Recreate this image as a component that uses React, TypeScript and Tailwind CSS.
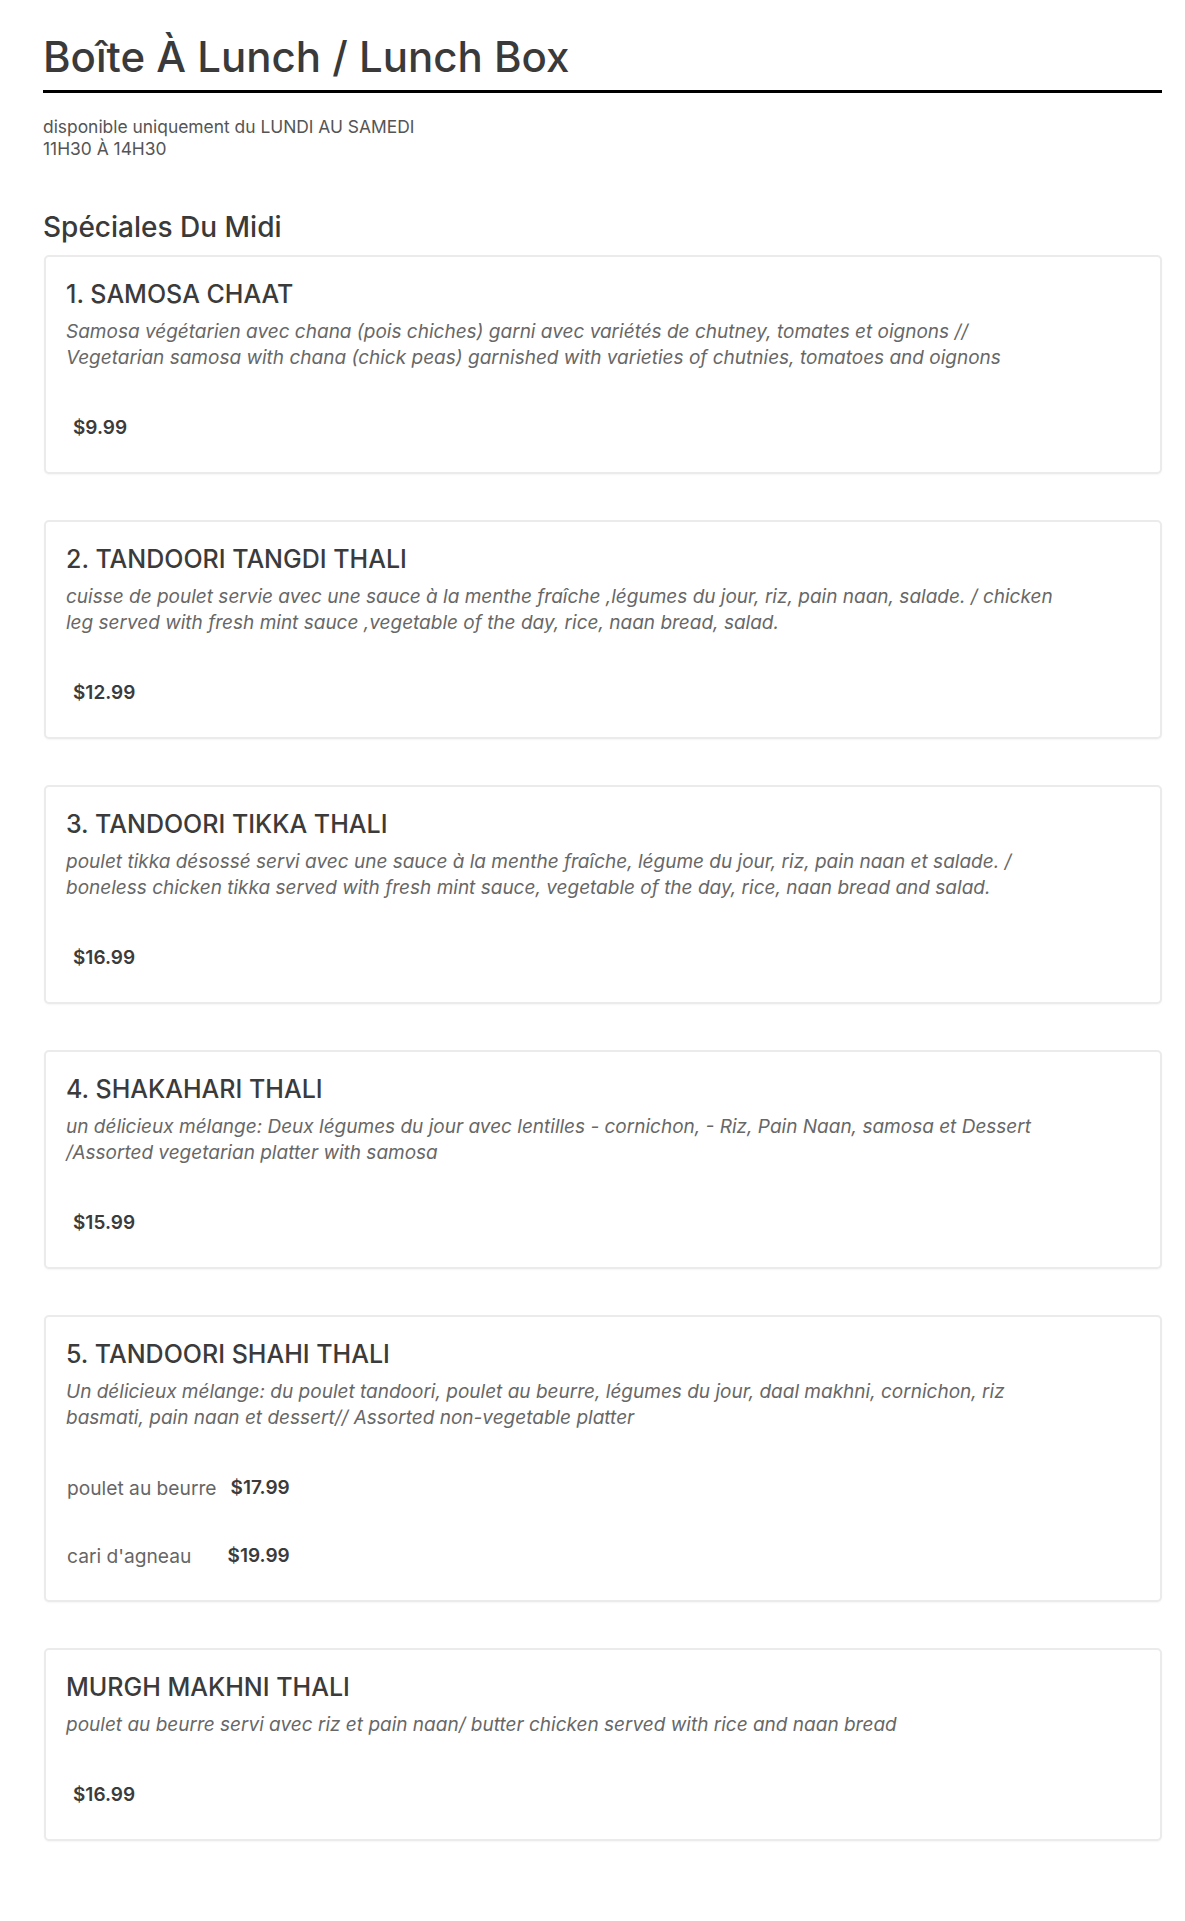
import React from "react";

type PriceRow = { label?: string; price: string };

type Item = {
  title: string;
  description: string;
  prices: PriceRow[];
};

const items: Item[] = [
  {
    title: "1. SAMOSA CHAAT",
    description:
      "Samosa végétarien avec chana (pois chiches) garni avec variétés de chutney, tomates et oignons // Vegetarian samosa with chana (chick peas) garnished with varieties of chutnies, tomatoes and oignons",
    prices: [{ price: "$9.99" }],
  },
  {
    title: "2. TANDOORI TANGDI THALI",
    description:
      "cuisse de poulet servie avec une sauce à la menthe fraîche ,légumes du jour, riz, pain naan, salade. / chicken leg served with fresh mint sauce ,vegetable of the day, rice, naan bread, salad.",
    prices: [{ price: "$12.99" }],
  },
  {
    title: "3. TANDOORI TIKKA THALI",
    description:
      "poulet tikka désossé servi avec une sauce à la menthe fraîche, légume du jour, riz, pain naan et salade. / boneless chicken tikka served with fresh mint sauce, vegetable of the day, rice, naan bread and salad.",
    prices: [{ price: "$16.99" }],
  },
  {
    title: "4. SHAKAHARI THALI",
    description:
      "un délicieux mélange: Deux légumes du jour avec lentilles - cornichon, - Riz, Pain Naan, samosa et Dessert /Assorted vegetarian platter with samosa",
    prices: [{ price: "$15.99" }],
  },
  {
    title: "5. TANDOORI SHAHI THALI",
    description:
      "Un délicieux mélange: du poulet tandoori, poulet au beurre, légumes du jour, daal makhni, cornichon, riz basmati, pain naan et dessert// Assorted non-vegetable platter",
    prices: [
      { label: "poulet au beurre", price: "$17.99" },
      { label: "cari d'agneau", price: "$19.99" },
    ],
  },
  {
    title: "MURGH MAKHNI THALI",
    description:
      "poulet au beurre servi avec riz et pain naan/ butter chicken served with rice and naan bread",
    prices: [{ price: "$16.99" }],
  },
];

function MenuCard({ item }: { item: Item }) {
  const labelled = item.prices.some((p) => p.label);
  return (
    <div className="rounded-[5px] border-2 border-[#ebebeb] bg-white px-[20px] pt-[19px] pb-[10px] shadow-[0_1px_2px_rgba(0,0,0,0.04)]">
      <h3 className="text-[25px] leading-[36px] font-medium text-[#3b3b3b]">{item.title}</h3>
      <p className="mt-[7px] max-w-[996px] text-[19px] leading-[26px] italic text-[#676767]">
        {item.description}
      </p>
      <div className="mt-[23px]">
        {labelled ? (
          <div className="grid grid-cols-[max-content_max-content] gap-x-[11px]">
            {item.prices.map((p) => (
              <React.Fragment key={p.price}>
                <span className="flex h-[68px] items-center pl-[1px] text-[19.2px] text-[#666]">{p.label}</span>
                <span className="flex h-[68px] items-center justify-end text-[19px] font-semibold text-[#3b3b3b]">
                  {p.price}
                </span>
              </React.Fragment>
            ))}
          </div>
        ) : (
          <div className="flex h-[68px] items-center pl-[7px] text-[19px] font-semibold text-[#3b3b3b]">
            {item.prices[0].price}
          </div>
        )}
      </div>
    </div>
  );
}

export default function App() {
  return (
    <div className="min-h-screen bg-white font-['Inter',sans-serif]">
      <div className="mx-[43px] w-[1119px] pt-[33px] pb-[80px]">
        <h1 className="border-b-[3px] border-black pb-[9px] text-[42px] leading-[48px] font-medium text-[#3a3a3a]">
          Boîte À Lunch / Lunch Box
        </h1>
        <div className="mt-[23px] text-[17.4px] leading-[22px] text-[#555]">
          <p>disponible uniquement du LUNDI AU SAMEDI</p>
          <p>11H30 À 14H30</p>
        </div>
        <h2 className="mt-[49px] text-[28px] leading-[36px] font-medium text-[#3a3a3a]">Spéciales Du Midi</h2>
        <div className="mt-[10px] flex flex-col gap-[46px] pl-[1px]">
          {items.map((item) => (
            <MenuCard key={item.title} item={item} />
          ))}
        </div>
      </div>
    </div>
  );
}
